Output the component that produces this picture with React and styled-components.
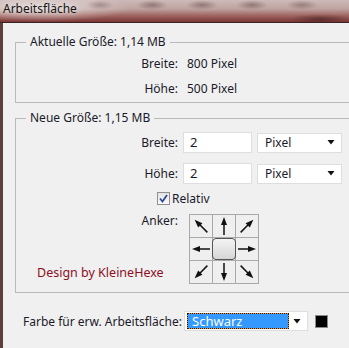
import React from 'react'
import styled, { createGlobalStyle } from 'styled-components'

const Global = createGlobalStyle`
  html, body {
    margin: 0;
    background: #f0f0f0;
  }
  body {
    font-family: "Noto Sans", "Open Sans", sans-serif;
    font-size: 12px;
    color: #1a1a2a;
  }
`

const Window = styled.div`
  width: 349px;
  height: 348px;
  overflow: hidden;
  display: flex;
  flex-direction: column;
`

const TitleBar = styled.div`
  height: 23px;
  box-sizing: border-box;
  flex-shrink: 0;
  padding: 1px 0 0 3px;
  line-height: 16px;
  font-size: 12px;
  color: #141414;
  text-shadow: 0 0 6px rgba(255, 255, 255, 0.8);
  border-bottom: 1px solid #3a2224;
  background:
    radial-gradient(ellipse 14px 5px at 100px 5px, rgba(70, 40, 40, 0.3), transparent),
    radial-gradient(ellipse 16px 5px at 152px 5px, rgba(70, 40, 40, 0.4), transparent),
    radial-gradient(ellipse 16px 5px at 202px 5px, rgba(70, 40, 40, 0.4), transparent),
    radial-gradient(ellipse 16px 5px at 252px 5px, rgba(70, 40, 40, 0.4), transparent),
    radial-gradient(ellipse 16px 5px at 302px 5px, rgba(70, 40, 40, 0.35), transparent),
    radial-gradient(ellipse 30px 5px at 320px 19px, rgba(40, 15, 15, 0.45), transparent),
    radial-gradient(ellipse 90px 14px at 40px 8px, rgba(235, 228, 228, 0.8), transparent),
    linear-gradient(180deg, #cdbab8 0%, #bea4a0 40%, #a06662 70%, #7a3634 100%);
`

const Body = styled.div`
  flex: 1;
  border-left: 3px solid #5d403c;
  padding-left: 12px;
  background: #f0f0f0;
`

const Group = styled.fieldset`
  margin: ${p => p.$top}px -8px 0 0;
  padding: 0 0 ${p => p.$bottom}px 10px;
  min-width: 0;
  border: 1px solid #bababa;
`

const Legend = styled.legend`
  padding: 0 4px;
  line-height: 16px;
`

const InfoRow = styled.div`
  display: flex;
  align-items: center;
  height: 20px;
  margin-top: ${p => p.$top}px;
`

const Label = styled.div`
  width: 152px;
  text-align: right;
  flex-shrink: 0;
`

const Value = styled.div`
  margin-left: 9px;
`

const FieldRow = styled.div`
  display: flex;
  align-items: center;
  gap: 5px;
  margin-top: ${p => p.$top}px;
`

const TextBox = styled.div`
  width: 69px;
  height: 21px;
  box-sizing: border-box;
  padding-left: 6px;
  line-height: 19px;
  font-size: 13px;
  background: #fff;
  border: 1px solid #dedede;
`

const Select = styled.div`
  width: ${p => p.$w}px;
  height: 20px;
  box-sizing: border-box;
  display: flex;
  align-items: center;
  padding: ${p => (p.$pad ? '0 6px 0 7px' : '0 6px 0 2px')};
  background: #fff;
  border: 1px solid #dedede;
`

const SelectText = styled.div`
  flex: 1;
`

const Highlight = styled.div`
  width: 102px;
  height: 16px;
  box-sizing: border-box;
  padding-left: 4px;
  line-height: 14px;
  font-size: 13px;
  color: #fff;
  border: 1px dotted #1a1a1a;
  background:
    linear-gradient(#3399ff, #3399ff) padding-box,
    linear-gradient(#e8922c, #e8922c) border-box;
  margin-right: auto;
`

const Caret = () => (
  <svg width="8" height="5" viewBox="0 0 8 5">
    <polygon points="0.5,0 7.5,0 4,4.5" fill="#111" />
  </svg>
)

const CheckRow = styled.div`
  display: flex;
  align-items: center;
  gap: 2px;
  margin: 7px 0 0 131px;
  height: 14px;
`

const CheckBox = styled.div`
  width: 13px;
  height: 13px;
  box-sizing: border-box;
  border: 1px solid #8f8f8f;
  background: linear-gradient(180deg, #e4e4e4, #fafafa);
  display: flex;
  align-items: center;
  justify-content: center;
`

const AnchorRow = styled.div`
  display: flex;
  gap: 11px;
  margin-top: 9px;
`

const AnchorSide = styled.div`
  width: 152px;
  display: flex;
  flex-direction: column;
`

const AnchorLabel = styled.div`
  text-align: right;
  line-height: 14px;
`

const Credit = styled.div`
  margin: auto 0 3px 11px;
  color: #8c0f1f;
  font-size: 12.5px;
`

const AnchorGrid = styled.div`
  display: grid;
  grid-template-columns: repeat(3, 22px);
  grid-template-rows: repeat(3, 22px);
  gap: 1px;
  padding: 1px;
  background: #a9a9a9;
  width: max-content;
`

const Cell = styled.div`
  background: #efefef;
  display: flex;
  align-items: center;
  justify-content: center;
`

const CenterButton = styled.div`
  width: 24px;
  height: 22px;
  margin: 0 -1px;
  flex-shrink: 0;
  box-sizing: border-box;
  border: 1px solid #555;
  border-radius: 4px;
  background: linear-gradient(180deg, #f4f4f4, #d6d6d6);
`

const ArrowSvg = styled.svg`
  transform: rotate(${p => p.$angle}deg);
`

const Arrow = ({ angle }) => (
  <ArrowSvg $angle={angle} width="22" height="22" viewBox="0 0 22 22">
    <polygon points="11,2 8,10 14,10" fill="#111" />
    <rect x="10.25" y="9" width="1.5" height="11" fill="#111" />
  </ArrowSvg>
)

const BottomRow = styled.div`
  display: flex;
  align-items: center;
  margin-top: 18px;
  padding-left: 8px;
`

const BottomLabel = styled.div`
  width: 161px;
  flex-shrink: 0;
  white-space: nowrap;
`

const Swatch = styled.div`
  width: 13px;
  height: 13px;
  box-sizing: border-box;
  margin-left: 7px;
  background: #000;
  border: 1px solid #8a8a8a;
`

const arrows = [315, 0, 45, 270, null, 90, 225, 180, 135]

export default function App() {
  return (
    <Window>
      <Global />
      <TitleBar>Arbeitsfläche</TitleBar>
      <Body>
        <Group $top={11} $bottom={4}>
          <Legend>Aktuelle Größe: 1,14 MB</Legend>
          <InfoRow $top={3}>
            <Label>Breite:</Label>
            <Value>800 Pixel</Value>
          </InfoRow>
          <InfoRow $top={5}>
            <Label>Höhe:</Label>
            <Value>500 Pixel</Value>
          </InfoRow>
        </Group>

        <Group $top={7} $bottom={8}>
          <Legend>Neue Größe: 1,15 MB</Legend>
          <FieldRow $top={6}>
            <Label>Breite:</Label>
            <TextBox>2</TextBox>
            <Select $w={85} $pad>
              <SelectText>Pixel</SelectText>
              <Caret />
            </Select>
          </FieldRow>
          <FieldRow $top={10}>
            <Label>Höhe:</Label>
            <TextBox>2</TextBox>
            <Select $w={85} $pad>
              <SelectText>Pixel</SelectText>
              <Caret />
            </Select>
          </FieldRow>
          <CheckRow>
            <CheckBox>
              <svg width="9" height="9" viewBox="0 0 9 9">
                <path d="M1 4.5 L3.5 7.5 L8 1" stroke="#2c4a9a" strokeWidth="1.8" fill="none" />
              </svg>
            </CheckBox>
            <span>Relativ</span>
          </CheckRow>
          <AnchorRow>
            <AnchorSide>
              <AnchorLabel>Anker:</AnchorLabel>
              <Credit>Design by KleineHexe</Credit>
            </AnchorSide>
            <AnchorGrid>
              {arrows.map((a, i) => (
                <Cell key={i}>{a === null ? <CenterButton /> : <Arrow angle={a} />}</Cell>
              ))}
            </AnchorGrid>
          </AnchorRow>
        </Group>

        <BottomRow>
          <BottomLabel>Farbe für erw. Arbeitsfläche:</BottomLabel>
          <Select $w={124}>
            <Highlight>Schwarz</Highlight>
            <Caret />
          </Select>
          <Swatch />
        </BottomRow>
      </Body>
    </Window>
  )
}
